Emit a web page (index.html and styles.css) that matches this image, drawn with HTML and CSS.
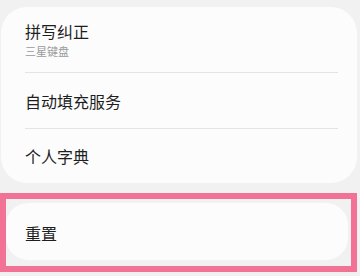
FILE: index.html
```
<!DOCTYPE html>
<html>

<head>
  <meta charset="UTF-8">
  <meta name="viewport" content="width=device-width, initial-scale=1.0">
  <title>键盘设置</title>
  <link rel="stylesheet" href="styles.css">
</head>

<body>
  <div class="card">
    <div class="item item-first">
      <span class="item-title">拼写纠正</span>
      <span class="item-sub">三星键盘</span>
    </div>
    <div class="item item-mid">
      <span class="item-title">自动填充服务</span>
    </div>
    <div class="item item-last">
      <span class="item-title">个人字典</span>
    </div>
  </div>

  <div class="highlight">
    <div class="card card-reset">
      <div class="item item-reset">
        <span class="item-title">重置</span>
      </div>
    </div>
  </div>
</body>

</html>
```

FILE: styles.css
```
html,
body {
  margin: 0;
  padding: 0;
  background: #f1f1f1;
  font-family: "Noto Sans CJK SC", "Noto Sans", sans-serif;
}

body {
  width: 360px;
  height: 276px;
  overflow: hidden;
}

.card {
  margin: 7px 3px 0 1px;
  background: #fcfcfc;
  border-radius: 26px;
}

.item {
  display: flex;
  flex-direction: column;
  justify-content: center;
  margin: 0 19px 0 24px;
  box-sizing: border-box;
}

.item-first {
  height: 66px;
  border-bottom: 1px solid #e4e4e4;
}

.item-mid {
  height: 56px;
  border-bottom: 1px solid #e4e4e4;
}

.item-last {
  height: 54px;
}

.item-title {
  font-size: 16px;
  line-height: 20px;
  color: #1e1e1e;
}

.item-sub {
  margin-top: 2px;
  font-size: 11px;
  line-height: 16px;
  color: #9a9a9a;
}

.highlight {
  width: 357px;
  height: 79px;
  margin-top: 10px;
  box-sizing: border-box;
  border: 6px solid #f27295;
  padding-top: 4px;
}

.card-reset {
  margin: 0 3px 0 0;
  height: 57px;
  border-radius: 22px;
}

.item-reset {
  height: 57px;
  margin-left: 19px;
  padding-top: 2px;
}
```
